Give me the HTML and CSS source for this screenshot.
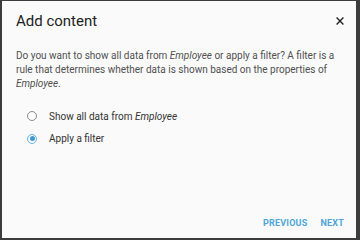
FILE: index.html
```html
<!DOCTYPE html>
<html>
<head>
<meta charset="utf-8">
<link rel="stylesheet" href="styles.css">
</head>
<body>
<div class="dialog">
  <div class="header">
    <h1 class="title">Add content</h1>
    <span class="close" aria-label="Close">
      <svg width="8" height="8" viewBox="0 0 8 8"><path d="M0.6 0.6L7.4 7.4M7.4 0.6L0.6 7.4" stroke="#222" stroke-width="1.4" fill="none"/></svg>
    </span>
  </div>
  <p class="desc">Do you want to show all data from <em>Employee</em> or apply a filter? A filter is a rule that determines whether data is shown based on the properties of <em>Employee</em>.</p>
  <div class="options">
    <label class="option"><span class="radio"></span><span>Show all data from <em>Employee</em></span></label>
    <label class="option"><span class="radio checked"></span><span>Apply a filter</span></label>
  </div>
  <div class="actions">
    <span class="btn">PREVIOUS</span>
    <span class="btn">NEXT</span>
  </div>
</div>
</body>
</html>
```
FILE: styles.css
```css
html, body { margin: 0; padding: 0; }
body {
  width: 360px; height: 240px;
  background: #3c3c3c;
  font-family: Roboto, "Liberation Sans", sans-serif;
  padding: 1px 4px 2px 2px;
  box-sizing: border-box;
}
.dialog {
  background: #fafafa;
  height: 237px;
  display: flex;
  flex-direction: column;
  box-sizing: border-box;
  padding: 0 0 0 14px;
}
.header {
  display: flex;
  align-items: center;
  justify-content: space-between;
  height: 40px;
}
.title {
  margin: 0;
  font-size: 15px;
  font-weight: 400;
  color: #222;
}
.close { display: flex; margin-right: 12px; }
.desc {
  margin: 8px 12px 0 0;
  font-size: 10px;
  line-height: 14px;
  color: #505050;
}
.options {
  display: flex;
  flex-direction: column;
  gap: 10.5px;
  margin-top: 19px;
  padding-left: 11px;
}
.option {
  display: flex;
  align-items: center;
  gap: 12px;
  font-size: 10px;
  color: #333;
  height: 12px;
}
.radio {
  width: 10px; height: 10px;
  border: 1px solid #8a8a8a;
  border-radius: 50%;
  box-sizing: border-box;
  position: relative;
}
.radio.checked { border-color: #6bb4de; }
.radio.checked::after {
  content: "";
  position: absolute;
  left: 1.5px; top: 1.5px;
  width: 5px; height: 5px;
  border-radius: 50%;
  background: #3d9ad1;
}
.actions {
  margin-top: auto;
  display: flex;
  justify-content: flex-end;
  gap: 13px;
  padding: 0 12px 10px 0;
}
.btn {
  font-size: 9px;
  font-weight: 700;
  color: #4ea6d8;
  letter-spacing: 0.2px;
}
```
